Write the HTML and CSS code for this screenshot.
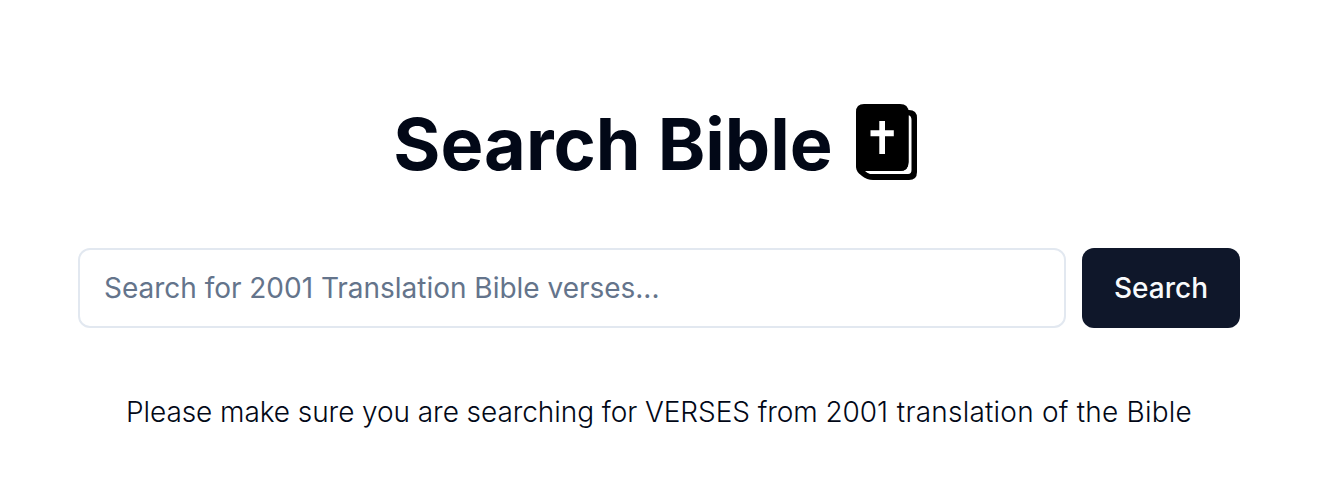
FILE: index.html
```html
<!DOCTYPE html>
<html lang="en">
<head>
<meta charset="utf-8">
<title>Search Bible</title>
<link rel="stylesheet" href="styles.css">
</head>
<body>
<main class="page">
  <h1 class="title"><span>Search Bible</span>
    <svg class="book" viewBox="0 0 61 76" aria-hidden="true">
      <path d="M50 6H53Q61 6 61 14V68Q61 76 53 76H17Q11 76 6 72L3 69.500Q0 67 0 62V30Z"/>
      <path class="paper" d="M52.500 11.300Q55.500 12 55.500 16V66Q55.500 70 52 70H14Q11 69 9 67H44Q52.500 67 52.500 58Z"/>
      <path d="M8 0H44Q52.500 0 52.500 8V58Q52.500 67 44 67H5Q0 66 0 60V8Q0 0 8 0Z"/>
      <path class="paper" d="M23.300 17H29V26.200H37.800V32.300H29V50H23.300V32.300H14.500V26.200H23.300Z"/>
    </svg>
  </h1>
  <form class="search">
    <input class="field" type="text" placeholder="Search for 2001 Translation Bible verses...">
    <button class="button" type="button">Search</button>
  </form>
  <p class="hint">Please make sure you are searching for VERSES from 2001 <span class="source">translation of the Bible</span></p>
</main>
</body>
</html>
```
FILE: styles.css
```css
* { box-sizing: border-box; }
body { margin: 0; background: #fff; color: #020817; font-family: Inter, sans-serif; }
.page { width: 1162px; margin-left: 78px; padding-top: 104px; }
.title { display: flex; justify-content: center; gap: 23px; height: 80px; margin: 0 0 64px; font-size: 72px; font-weight: 700; line-height: 79px; letter-spacing: 0; padding-right: 8px; }
.book { width: 61px; height: 76px; fill: #000; }
.paper { fill: #fff; }
.search { display: flex; gap: 16px; height: 80px; margin: 0; }
.field { flex: 1; min-width: 0; padding: 0 24px; border: 2px solid #e2e8f0; border-radius: 12px; background: #fff; font: 400 28px Inter, sans-serif; letter-spacing: -0.02px; }
.field::placeholder { color: #64748b; opacity: 1; }
.button { width: 158px; padding: 0; border: 0; border-radius: 12px; background: #0f172a; color: #f8fafc; font: 500 28px Inter, sans-serif; }
.hint { margin: 64px 0 0; text-align: center; font-size: 28px; font-weight: 300; line-height: 40px; letter-spacing: -0.07px; white-space: nowrap; }
.source { margin-left: 1px; letter-spacing: 0.22px; }
```
